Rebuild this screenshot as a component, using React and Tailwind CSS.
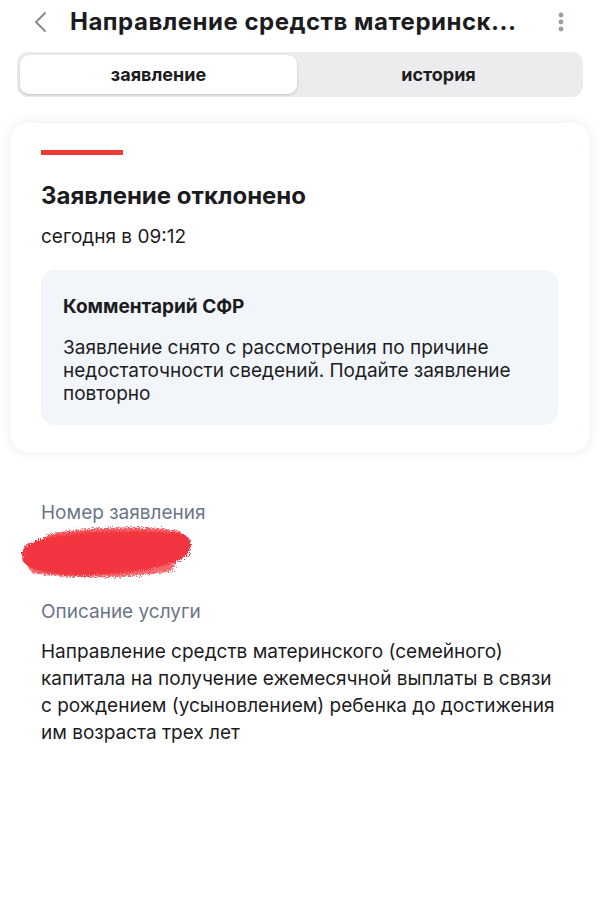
import React from 'react'

const font = { fontFamily: 'Inter, "Noto Sans", sans-serif' }

const Redaction = () => (
  <svg width="180" height="54" viewBox="0 0 180 54" className="block">
    <defs>
      <filter id="rough">
        <feTurbulence type="fractalNoise" baseFrequency="0.8" numOctaves="2" result="n" />
        <feDisplacementMap in="SourceGraphic" in2="n" scale="8" />
      </filter>
    </defs>
    <g filter="url(#rough)" fill="#f2343f">
      <path d="M12 18 C40 6 100 4 160 8 C174 10 176 20 170 28 C164 40 124 48 72 50 C40 52 10 46 5 36 C2 28 5 22 12 18 Z" />
      <path d="M28 10 C60 2 122 0 162 6 L164 14 C120 10 70 12 30 18 Z" opacity="0.8" />
      <path d="M8 38 C40 50 112 50 158 38 L154 46 C110 54 50 54 14 48 Z" opacity="0.75" />
    </g>
  </svg>
)

export default function App() {
  return (
    <div className="w-[600px] min-h-[903px] bg-white text-[#1c1c1f]" style={font}>
      {/* header */}
      <div className="flex items-center h-[44px] pl-[33px] pr-[35px]">
        <svg width="16" height="24" viewBox="0 0 16 24" className="shrink-0">
          <path d="M12 3 L3 12 L12 21" fill="none" stroke="#8a8d93" strokeWidth="2" strokeLinecap="round" strokeLinejoin="round" />
        </svg>
        <h1 className="ml-[21px] flex-1 text-[24px] font-bold tracking-[0.5px] whitespace-nowrap overflow-hidden">
          Направление средств материнск...
        </h1>
        <svg width="8" height="24" viewBox="0 0 8 24" className="shrink-0 ml-4">
          <circle cx="4" cy="5" r="2.4" fill="#9a9ea6" />
          <circle cx="4" cy="12" r="2.4" fill="#9a9ea6" />
          <circle cx="4" cy="19" r="2.4" fill="#9a9ea6" />
        </svg>
      </div>

      {/* tabs */}
      <div className="mx-[17px] mt-[8px] h-[45px] rounded-[11px] bg-[#ececee] p-[3px] flex">
        <div className="w-[277px] rounded-[9px] bg-white shadow-[0_1px_3px_rgba(0,0,0,0.18)] flex items-center justify-center text-[18px] font-bold">
          заявление
        </div>
        <div className="flex-1 flex items-center justify-center text-[18px] font-bold">
          история
        </div>
      </div>

      {/* status card */}
      <div className="mx-[11px] mt-[26px] rounded-[16px] bg-white shadow-[0_0_12px_rgba(20,30,60,0.09)] px-[30px] pt-[27px] pb-[27px]">
        <div className="w-[82px] h-[5px] bg-[#ee3b36]" />
        <div className="mt-[26px] text-[24px] font-bold leading-[30px]">Заявление отклонено</div>
        <div className="mt-[14px] text-[19px] leading-[24px]">сегодня в 09:12</div>
        <div className="mt-[21px] mr-[1px] rounded-[14px] bg-[#f2f5f9] px-[22px] pt-[25px] pb-[20px]">
          <div className="text-[19px] font-bold leading-[24px]">Комментарий СФР</div>
          <div className="mt-[17px] text-[19px] leading-[23px]">
            Заявление снято с рассмотрения по причине недостаточности сведений. Подайте заявление повторно
          </div>
        </div>
      </div>

      {/* details */}
      <div className="px-[41px] mt-[49px]">
        <div className="text-[19px] leading-[24px] text-[#6b7588]">Номер заявления</div>
        <div className="h-[50px] -ml-[23px]">
          <Redaction />
        </div>
        <div className="mt-[25px] text-[19px] leading-[24px] text-[#6b7588]">Описание услуги</div>
        <div className="mt-[14px] text-[19px] leading-[27px] text-[#1c1c1f]">
          Направление средств материнского (семейного) капитала на получение ежемесячной выплаты в связи с рождением (усыновлением) ребенка до достижения им возраста трех лет
        </div>
      </div>
    </div>
  )
}
